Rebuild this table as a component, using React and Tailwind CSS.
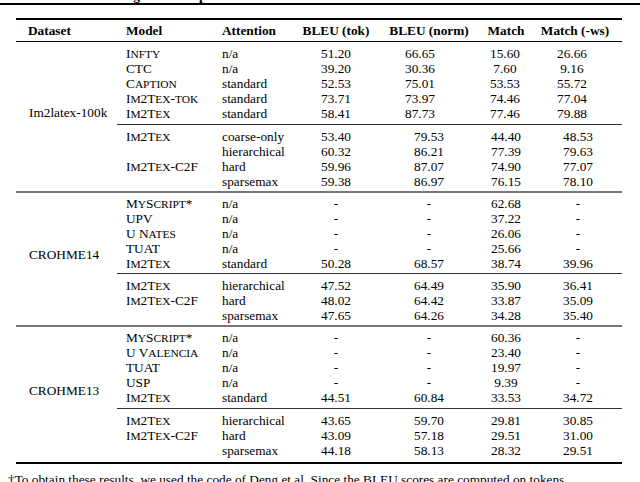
import React from 'react'

const groups = [
  {
    name: 'Im2latex-100k',
    pad: ['pt-[4px] pb-[3px]', 'pt-[4px] pb-[2px]'],
    blocks: [
      [
        ['Infty', 'n/a', '51.20', '66.65', '15.60', '26.66'],
        ['CTC', 'n/a', '39.20', '30.36', '7.60', '9.16'],
        ['Caption', 'standard', '52.53', '75.01', '53.53', '55.72'],
        ['Im2Tex-tok', 'standard', '73.71', '73.97', '74.46', '77.04'],
        ['Im2Tex', 'standard', '58.41', '87.73', '77.46', '79.88'],
      ],
      [
        ['Im2Tex', 'coarse-only', '53.40', '79.53', '44.40', '48.53'],
        ['', 'hierarchical', '60.32', '86.21', '77.39', '79.63'],
        ['Im2Tex-C2F', 'hard', '59.96', '87.07', '74.90', '77.07'],
        ['', 'sparsemax', '59.38', '86.97', '76.15', '78.10'],
      ],
    ],
  },
  {
    name: 'CROHME14',
    pad: ['pt-[3px] pb-[2px]', 'pt-[4px] pb-[2px]'],
    blocks: [
      [
        ['MyScript*', 'n/a', '-', '-', '62.68', '-'],
        ['UPV', 'n/a', '-', '-', '37.22', '-'],
        ['U Nates', 'n/a', '-', '-', '26.06', '-'],
        ['TUAT', 'n/a', '-', '-', '25.66', '-'],
        ['Im2Tex', 'standard', '50.28', '68.57', '38.74', '39.96'],
      ],
      [
        ['Im2Tex', 'hierarchical', '47.52', '64.49', '35.90', '36.41'],
        ['Im2Tex-C2F', 'hard', '48.02', '64.42', '33.87', '35.09'],
        ['', 'sparsemax', '47.65', '64.26', '34.28', '35.40'],
      ],
    ],
  },
  {
    name: 'CROHME13',
    pad: ['pt-[3px] pb-[3px]', 'pt-[4px] pb-[4px]'],
    blocks: [
      [
        ['MyScript*', 'n/a', '-', '-', '60.36', '-'],
        ['U Valencia', 'n/a', '-', '-', '23.40', '-'],
        ['TUAT', 'n/a', '-', '-', '19.97', '-'],
        ['USP', 'n/a', '-', '-', '9.39', '-'],
        ['Im2Tex', 'standard', '44.51', '60.84', '33.53', '34.72'],
      ],
      [
        ['Im2Tex', 'hierarchical', '43.65', '59.70', '29.81', '30.85'],
        ['Im2Tex-C2F', 'hard', '43.09', '57.18', '29.51', '31.00'],
        ['', 'sparsemax', '44.18', '58.13', '28.32', '29.51'],
      ],
    ],
  },
]

// small caps like the paper's font: lowercase runs set as smaller capitals
const SmallCaps = ({ text }) => {
  const runs = text.match(/[a-z]+|[^a-z]+/g) || []
  return runs.map((run, i) =>
    /[a-z]/.test(run[0])
      ? <span key={i} className="text-[11.4px] uppercase">{run}</span>
      : <span key={i}>{run}</span>
  )
}

const Row = ({ r, first }) => (
  <div className="flex h-[15px] items-center leading-[15px]">
    <div className="w-[96px] pl-[9px] whitespace-nowrap"><SmallCaps text={r[0]} /></div>
    <div className="w-[79px] pl-[9px]">{r[1]}</div>
    <div className="w-[88px] text-center">{r[2]}</div>
    <div className={first ? 'w-[98px] pr-[18px] text-center' : 'w-[98px] text-center'}>{r[3]}</div>
    <div className={first ? 'w-[56px] pr-[2px] text-center' : 'w-[56px] text-center'}>{r[4]}</div>
    <div className={first ? 'w-[88px] pr-[12px] text-center' : 'w-[88px] text-center'}>{r[5]}</div>
  </div>
)

const Group = ({ g, gi }) => (
  <div className="flex">
    <div className="w-[101px] flex items-center pl-[13px] pb-[8px]">{g.name}</div>
    <div className="flex-1">
      <div className={g.pad[0]}>
        {g.blocks[0].map((r, i) => <Row key={i} r={r} first={gi === 0} />)}
      </div>
      <div className="h-px bg-[#333]" />
      <div className={g.pad[1]}>
        {g.blocks[1].map((r, i) => <Row key={i} r={r} />)}
      </div>
    </div>
  </div>
)

export default function App() {
  return (
    <div className="font-serif">
      <div className="w-[640px] h-[482px] overflow-hidden bg-white text-black font-[Liberation_Serif,serif] text-[13.3px]">
        <div className="-mt-[11px] h-[14px] pl-[16px] leading-[14px] font-bold whitespace-nowrap">
          Table 3: Results using these comparisons
        </div>
        <div className="h-[2px] bg-black" />
        <div className="mx-[16px] mt-[13px] w-[606px]">
          <div className="h-[2px] bg-black" />
          <div className="flex h-[21px] items-center font-bold">
            <div className="w-[101px] pl-[12px]">Dataset</div>
            <div className="w-[96px] pl-[9px]">Model</div>
            <div className="w-[79px] pl-[9px]">Attention</div>
            <div className="w-[88px] text-center">BLEU (tok)</div>
            <div className="w-[98px] text-center">BLEU (norm)</div>
            <div className="w-[56px] text-center">Match</div>
            <div className="w-[88px] pr-[6px] text-center">Match (-ws)</div>
          </div>
          <div className="h-px bg-black" />
          {groups.map((g, i) => (
            <div key={g.name}>
              {i > 0 && <div className="h-[2px] bg-[#777]" />}
              <Group g={g} gi={i} />
            </div>
          ))}
          <div className="h-[2px] bg-black" />
        </div>
        <div className="mt-[8px] pl-[8px] whitespace-nowrap leading-[16px]">
          †To obtain these results, we used the code of Deng et al. Since the BLEU scores are computed on tokens
        </div>
      </div>
    </div>
  )
}
